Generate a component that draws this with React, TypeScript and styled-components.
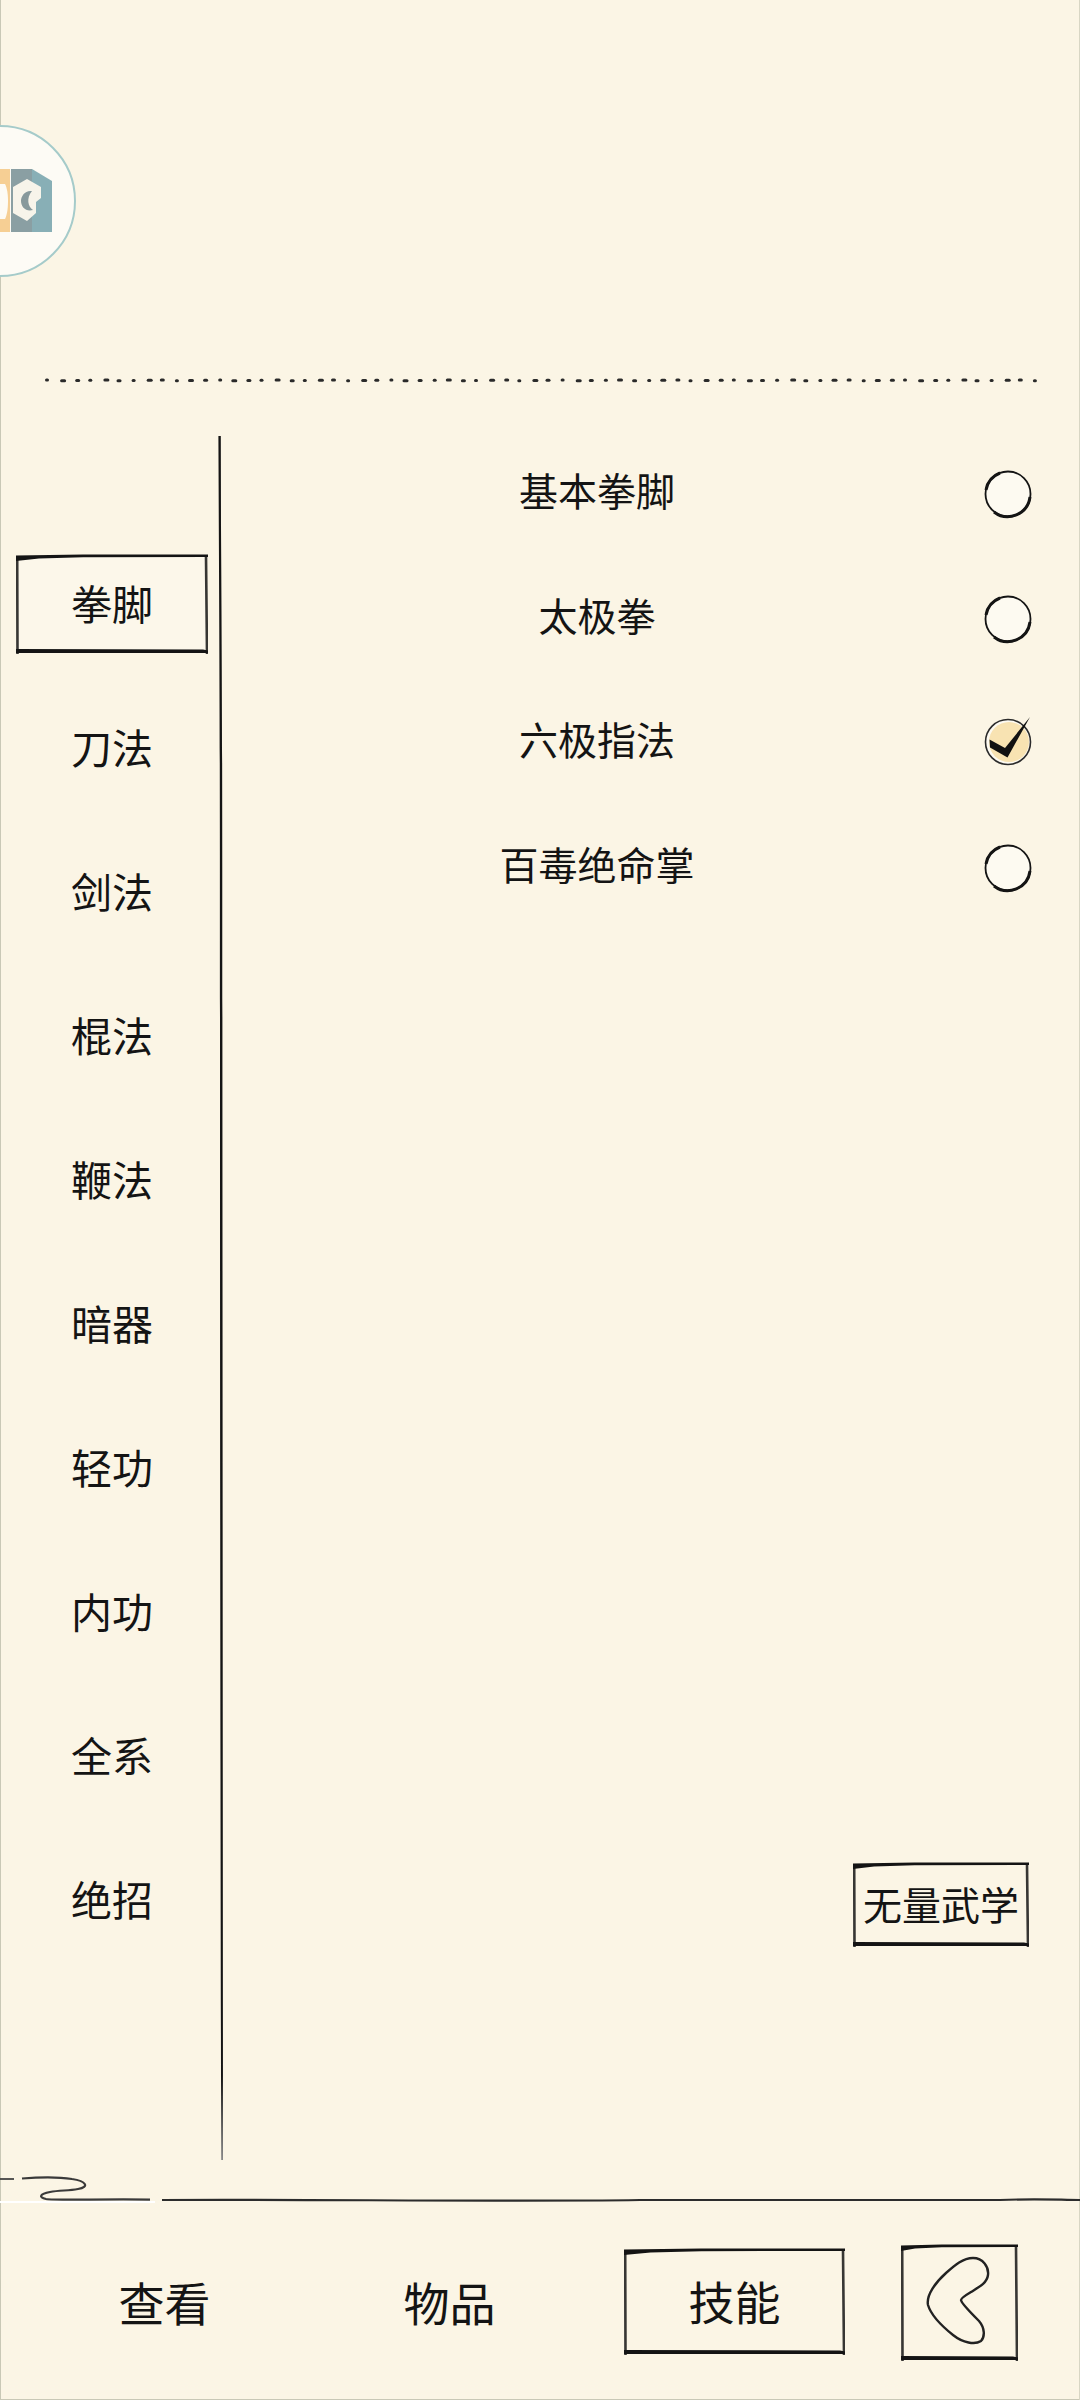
import React from "react";
import styled, { createGlobalStyle } from "styled-components";

const GlobalStyle = createGlobalStyle`
  html, body {
    margin: 0;
    padding: 0;
    background: #fbf5e5;
  }
  * {
    box-sizing: border-box;
  }
`;

const INK = "#141414";

const Page = styled.div`
  position: relative;
  width: 1080px;
  height: 2400px;
  overflow: hidden;
  display: flex;
  flex-direction: column;
  background: #fbf5e5;
  color: ${INK};
  font-family: "Noto Sans CJK SC", "Noto Sans", sans-serif;
  font-weight: 400;
  box-shadow: inset 1px 0 0 #c9c8b6, inset -1px 0 0 #d8d6c4, inset 0 -1px 0 #c9c8b6;
`;

const TopArea = styled.header`
  flex: none;
  height: 430px;
  padding-top: 125px;
`;

const LogoCircle = styled.div`
  width: 152px;
  height: 152px;
  margin-left: -76px;
  border-radius: 50%;
  border: 2px solid #a5cbca;
  background: #fdfbf5;
  overflow: hidden;
`;

const DotLine = styled.svg`
  display: block;
  margin-top: 100px;
`;

const Main = styled.main`
  flex: 1;
  min-height: 0;
  display: flex;
`;

const Sidebar = styled.nav`
  flex: none;
  width: 216px;
  padding: 102px 0 0 16px;
  display: flex;
  flex-direction: column;
`;

const TabRow = styled.div`
  height: 144px;
  display: flex;
  align-items: center;
`;

const SketchBox = styled.div<{ $w: number; $h: number; $size: number }>`
  position: relative;
  flex: none;
  width: ${(p) => p.$w}px;
  height: ${(p) => p.$h}px;
  display: flex;
  align-items: center;
  justify-content: center;
  font-size: ${(p) => p.$size}px;
  line-height: 1;
`;

const FrameSvg = styled.svg`
  position: absolute;
  inset: 0;
  pointer-events: none;
`;

const TabFill = styled.div`
  position: absolute;
  inset: 2px;
  background: #fcf7ea;
`;

const BoxLabel = styled.span`
  position: relative;
  padding-bottom: 3px;
`;

const RuleSvg = styled.svg`
  flex: none;
  display: block;
  margin-top: 6px;
`;

const Content = styled.section`
  flex: 1;
  min-width: 0;
  display: flex;
  flex-direction: column;
`;

const SkillList = styled.ul`
  list-style: none;
  margin: 0;
  padding: 0 50px 0 0;
`;

const SkillRow = styled.li`
  height: 124.7px;
  display: grid;
  grid-template-columns: 1fr 46px;
  column-gap: 14px;
  align-items: center;
`;

const SkillName = styled.span`
  text-align: center;
  font-size: 39px;
  line-height: 1;
  padding-bottom: 6px;
`;

const RadioSvg = styled.svg<{ $checked: boolean }>`
  display: block;
  overflow: visible;
  margin: ${(p) => (p.$checked ? "0" : "3px")} -2px 0 0;
`;

const ActionWrap = styled.div`
  margin-top: auto;
  margin-bottom: 223px;
  margin-right: 51px;
  align-self: flex-end;
`;

const DividerSvg = styled.svg`
  flex: none;
  display: block;
`;

const Footer = styled.footer`
  flex: none;
  height: 196px;
  padding-left: 22px;
  display: grid;
  grid-template-columns: 285px 285px 285px auto;
  align-items: center;
`;

const FooterItem = styled.div`
  display: flex;
  justify-content: center;
  font-size: 46px;
  line-height: 1;
  padding-bottom: 2px;
`;

const BackIconSvg = styled.svg`
  position: absolute;
  inset: 0;
`;

const BackCell = styled.div`
  padding-left: 24px;
`;

const tabs = ["拳脚", "刀法", "剑法", "棍法", "鞭法", "暗器", "轻功", "内功", "全系", "绝招"];
const skills = [
  { name: "基本拳脚", checked: false },
  { name: "太极拳", checked: false },
  { name: "六极指法", checked: true },
  { name: "百毒绝命掌", checked: false },
];

// hand drawn rectangle: heavy wedge top left, heavy bottom edge
const SketchFrame = ({ w, h }: { w: number; h: number }) => (
  <FrameSvg width={w} height={h} viewBox={`0 0 ${w} ${h}`}>
    <path d={`M1.5 ${h} L1.2 2 M${w - 2} 2 L${w - 1} ${h}`} stroke={INK} strokeWidth="2.6" fill="none" opacity="0.85" />
    <path d={`M0 1.5 L${w * 0.35} 0.5 L${w} 0.5 L${w} 3 L${w * 0.35} 3.2 L${w * 0.12} 4.5 L0 7 Z`} fill={INK} />
    <path d={`M0 ${h - 5} L${w - 5} ${h - 4.5} L${w} ${h - 3.5} L${w} ${h - 1} L0 ${h - 1} Z`} fill={INK} />
  </FrameSvg>
);

const Radio = ({ checked }: { checked: boolean }) => (
  <RadioSvg $checked={checked} width="48" height="48" viewBox="0 0 48 48">
    <circle cx="24" cy="24" r="22.5" fill="#fdfaf1" />
    {checked ? (
      <>
        <ellipse cx="25" cy="24" rx="20" ry="20" fill="#f8e3b2" />
        <circle cx="24" cy="24" r="22.5" fill="none" stroke="#2b2b2b" strokeWidth="1.6" />
        <path d="M5.5 21.5 L21 30 L46 -1 L23.5 39.5 L6 29.5 Z" fill="#111" />
      </>
    ) : (
      <>
        <circle cx="24" cy="24" r="22.5" fill="none" stroke={INK} strokeWidth="1.8" />
        <path d="M46 27 A22.5 22.5 0 0 1 10 42 M2 20 A22.5 22.5 0 0 1 16 3" fill="none" stroke={INK} strokeWidth="3" />
      </>
    )}
  </RadioSvg>
);

const Logo = () => (
  <svg width="148" height="148" viewBox="-74 126 148 148" style={{ display: "block" }}>
    <path d="M-10 168H10V231H-10Z" fill="#f6cf94" />
    <path d="M-10 183H5C9 190 9 210 5 218H-10Z" fill="#fdfbf5" />
    <path d="M11 168H32V231H11Z" fill="#8a9fa3" />
    <path d="M32 168L52 180V231H32Z" fill="#88afb6" />
    <path d="M27 178L41 186V197L36 201V212L27 220L13 212V186Z" fill="#f7f4ea" />
    <path d="M32 190C25 189 21 195 21 200C21 206 26 211 33 209C28 206 26 197 32 190Z" fill="#87999c" />
  </svg>
);

const DOT_COUNT = 70;
const dots = Array.from({ length: DOT_COUNT }, (_, i) => ({
  x: 45 + i * 14.3 + ((i * 7) % 5) * 0.4,
  w: 4 + ((i * 5) % 3),
  y: 1.5 + ((i * 3) % 4) * 0.25,
}));

export default function App() {
  return (
    <Page>
      <GlobalStyle />
      <TopArea>
        <LogoCircle>
          <Logo />
        </LogoCircle>
        <DotLine width="1080" height="6" viewBox="0 0 1080 6">
          {dots.map((d) => (
            <rect key={d.x} x={d.x} y={d.y} width={d.w} height="3" rx="1.5" fill="#2a2a2a" />
          ))}
        </DotLine>
      </TopArea>

      <Main>
        <Sidebar>
          {tabs.map((tab, i) => (
            <TabRow key={tab}>
              <SketchBox $w={192} $h={100} $size={41}>
                {i === 0 && <TabFill />}
                {i === 0 && <SketchFrame w={192} h={100} />}
                <BoxLabel>{tab}</BoxLabel>
              </SketchBox>
            </TabRow>
          ))}
        </Sidebar>

        <RuleSvg width="8" height="1724" viewBox="0 0 8 1724">
          <defs>
            <linearGradient id="rule-fade" gradientUnits="userSpaceOnUse" x1="0" y1="1640" x2="0" y2="1724">
              <stop offset="0" stopColor={INK} />
              <stop offset="1" stopColor="#888" />
            </linearGradient>
          </defs>
          <path d="M2.4 0 L2.8 90 C3.6 240 4 330 4 600 C4 1000 4.4 1400 5.2 1724 L7 1724 C6.8 1400 6.6 1000 6.4 600 C6.4 330 6 240 5 90 L4.8 0 Z" fill="url(#rule-fade)" />
        </RuleSvg>

        <Content>
          <SkillList>
            {skills.map((s) => (
              <SkillRow key={s.name}>
                <SkillName>{s.name}</SkillName>
                <Radio checked={s.checked} />
              </SkillRow>
            ))}
          </SkillList>
          <ActionWrap>
            <SketchBox $w={176} $h={85} $size={39}>
              <SketchFrame w={176} h={85} />
              <BoxLabel>无量武学</BoxLabel>
            </SketchBox>
          </ActionWrap>
        </Content>
      </Main>

      <DividerSvg width="1080" height="34" viewBox="0 0 1080 34">
        <path d="M0 9 H14" fill="none" stroke="#444" strokeWidth="1.8" />
        <path
          d="M22 8.5 C40 7 60 7 72 9 C86 11 90 17 78 19 C68 21 60 20 50 22 C40 24 38 27 46 29 C54 30.5 100 29 150 29.6"
          fill="none"
          stroke="#3a3a3a"
          strokeWidth="2.2"
        />
        <path d="M162 30 C300 29 500 32 640 30 C800 29 950 31 1000 30 C1040 28.5 1060 30 1080 30" fill="none" stroke="#2c2c2c" strokeWidth="2.2" />
        <rect x="0" y="31" width="155" height="2" fill="#ffffff" />
      </DividerSvg>

      <Footer>
        <FooterItem>查看</FooterItem>
        <FooterItem>物品</FooterItem>
        <FooterItem>
          <SketchBox $w={221} $h={107} $size={46}>
            <SketchFrame w={221} h={107} />
            <BoxLabel>技能</BoxLabel>
          </SketchBox>
        </FooterItem>
        <BackCell>
          <SketchBox $w={117} $h={117} $size={46}>
            <SketchFrame w={117} h={117} />
            <BackIconSvg width="117" height="117" viewBox="0 0 117 117">
              <path
                d="M45 29 C54 21 62 14 72 14 C82 14 88 23 87 31 C86 39 78 43 70 48 C65 51 60 54 60 56 C60 59 70 69 78 77 C84 84 84 93 80 97 C74 101 62 99 52 91 C42 83 30 71 27 61 C25 51 35 38 45 29 Z"
                fill="none"
                stroke="#222"
                strokeWidth="2.4"
              />
            </BackIconSvg>
          </SketchBox>
        </BackCell>
      </Footer>
    </Page>
  );
}
